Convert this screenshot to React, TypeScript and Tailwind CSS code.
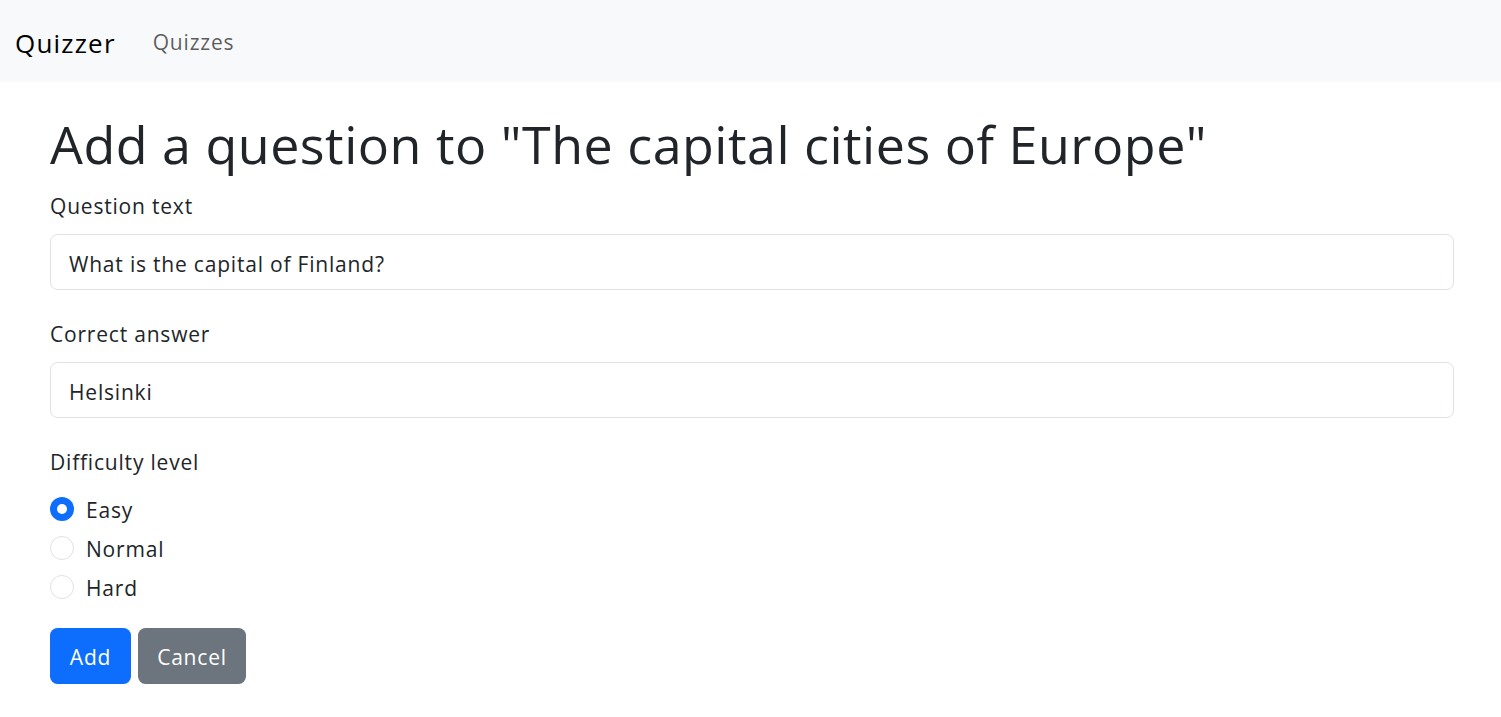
const font = { fontFamily: '"Open Sans", "Noto Sans", sans-serif' };

const Radio = ({ label, checked }: { label: string; checked?: boolean }) => (
  <div className="flex items-center h-[39px]">
    {checked ? (
      <span className="w-6 h-6 rounded-full bg-[#0d6efd] flex items-center justify-center">
        <span className="w-[10px] h-[10px] rounded-full bg-white" />
      </span>
    ) : (
      <span className="w-6 h-6 rounded-full border border-[#dee2e6] bg-white" />
    )}
    <span className="ml-3 pt-[2px] text-[21px] leading-[30px] tracking-[0.8px]">{label}</span>
  </div>
);

const Field = ({ label, value }: { label: string; value: string }) => (
  <div className="mb-[29px]">
    <div className="text-[21px] leading-[30px] tracking-[0.8px] mb-[13px]">{label}</div>
    <div className="h-[56px] w-full rounded-[7.5px] border border-[#dee2e6] flex items-center px-[18px] pt-[5px] text-[21px] tracking-[0.8px]">
      {value}
    </div>
  </div>
);

export default function App() {
  return (
    <div className="min-h-screen bg-white text-[#212529]" style={font}>
      <nav className="h-[82px] bg-[#f8f9fa] flex items-center px-[15px] pt-[4px]">
        <span className="text-[26px] tracking-[1.2px] text-black mr-[37px]">Quizzer</span>
        <span className="text-[21px] tracking-[0.8px] text-black/65">Quizzes</span>
      </nav>
      <main className="px-[50px] w-[1504px]">
        <h1 className="text-[52px] tracking-[0.5px] leading-[60px] mt-[32px] mb-[17px]">
          Add a question to "The capital cities of Europe"
        </h1>
        <Field label="Question text" value="What is the capital of Finland?" />
        <Field label="Correct answer" value="Helsinki" />
        <div className="text-[21px] leading-[30px] tracking-[0.8px] mb-[12px]">Difficulty level</div>
        <Radio label="Easy" checked />
        <Radio label="Normal" />
        <Radio label="Hard" />
        <div className="flex gap-[7px] mt-[22px]">
          <button className="h-[56px] w-[81px] pt-[3px] rounded-[7.5px] bg-[#0d6efd] text-white text-[21px] tracking-[0.8px]">Add</button>
          <button className="h-[56px] w-[108px] pt-[3px] rounded-[7.5px] bg-[#6c757d] text-white text-[21px] tracking-[0.8px]">Cancel</button>
        </div>
      </main>
    </div>
  );
}
